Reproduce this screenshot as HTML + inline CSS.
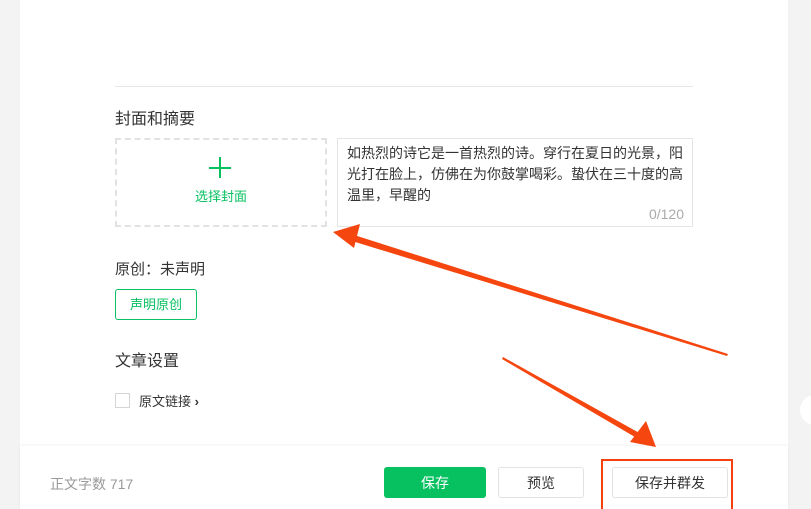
<!DOCTYPE html>
<html><head><meta charset="utf-8"><style>
*{margin:0;padding:0;box-sizing:border-box}
html,body{width:811px;height:509px;overflow:hidden}
body{background:#f3f3f3;position:relative;font-family:"Liberation Sans","Noto Sans CJK SC",sans-serif;color:#333}
.panel{position:absolute;left:20px;top:0;width:768px;height:509px;background:#fff}
.abs{position:absolute;line-height:1.2}
.btn{position:absolute;top:467px;height:31px;border-radius:3px;font-size:14px;display:flex;align-items:center;justify-content:center}
</style></head><body>
<div class="panel"></div>
<div class="abs" style="left:115px;top:86px;width:578px;height:1px;background:#e7e7e7"></div>
<div class="abs" style="left:115px;top:110px;font-size:16px;color:#333">封面和摘要</div>
<div class="abs" style="left:115px;top:138px;width:212px;height:89px;border:2px dashed #e2e2e2"></div>
<div class="abs" style="left:209px;top:167px;width:22px;height:2px;background:#07c160"></div>
<div class="abs" style="left:219px;top:157px;width:2px;height:21px;background:#07c160"></div>
<div class="abs" style="left:115px;top:189px;width:212px;text-align:center;font-size:13px;color:#07c160">选择封面</div>
<div class="abs" style="left:337px;top:138px;width:356px;height:89px;border:1px solid #e5e5e5"></div>
<div class="abs" style="left:347px;top:143px;width:340px;font-size:14px;line-height:21px;color:#333">如热烈的诗它是一首热烈的诗。穿行在夏日的光景，阳光打在脸上，仿佛在为你鼓掌喝彩。蛰伏在三十度的高温里，早醒的</div>
<div class="abs" style="left:630px;top:206px;width:54px;text-align:right;font-size:14px;color:#aaa">0/120</div>
<div class="abs" style="left:115px;top:261px;font-size:15px">原创：未声明</div>
<div class="abs" style="left:115px;top:289px;width:82px;height:31px;border:1px solid #07c160;border-radius:3px;color:#07c160;font-size:13px;display:flex;align-items:center;justify-content:center">声明原创</div>
<div class="abs" style="left:115px;top:352px;font-size:16px">文章设置</div>
<div class="abs" style="left:115px;top:393px;width:15px;height:15px;border:1px solid #d5d5d5"></div>
<div class="abs" style="left:139px;top:394px;font-size:13px">原文链接 <b style="font-size:13px">›</b></div>
<div class="abs" style="left:20px;top:446px;width:768px;height:63px;background:#fff;box-shadow:0 -1px 3px rgba(0,0,0,0.06)"></div>
<div class="abs" style="left:50px;top:476px;font-size:14px;color:#999">正文字数 717</div>
<div class="btn" style="left:384px;width:102px;background:#07c160;color:#fff">保存</div>
<div class="btn" style="left:498px;width:86px;border:1px solid #e2e2e2;color:#333">预览</div>
<div class="btn" style="left:612px;width:116px;border:1px solid #e2e2e2;color:#333">保存并群发</div>
<div class="abs" style="left:601px;top:459px;width:132px;height:54px;border:2px solid #f5400f"></div>
<div class="abs" style="left:800px;top:395px;width:30px;height:30px;border-radius:50%;background:#fff"></div>
<svg class="abs" style="left:0;top:0" width="811" height="509">
<polygon points="728,354 727,356 352,241 354,235" fill="#f5460f"/>
<polygon points="333,232 360,224 354,248" fill="#f5460f"/>
<polygon points="503,357 502,359 640,440 643,435" fill="#f5460f"/>
<polygon points="656,447 630,442 646,421" fill="#f5460f"/>
</svg>
</body></html>
